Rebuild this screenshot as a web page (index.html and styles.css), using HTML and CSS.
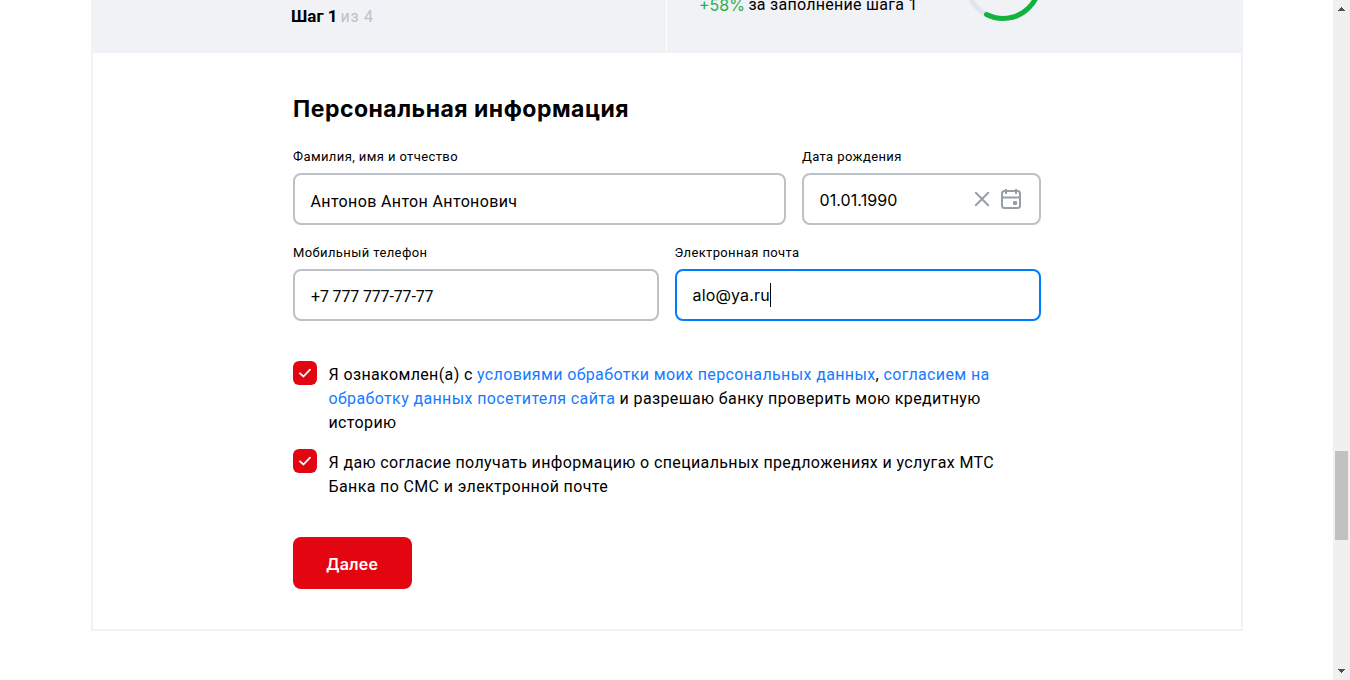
FILE: index.html
```html
<!DOCTYPE html>
<html lang="ru">
<head>
<meta charset="utf-8">
<title>Персональная информация</title>
<link rel="stylesheet" href="styles.css">
</head>
<body>
<main class="page">
  <section class="card">
    <header class="card-head">
      <div class="step"><b class="step-now">Шаг 1</b><span class="step-total">из 4</span></div>
      <div class="bonus">
        <p class="bonus-text"><span class="percent">+58%</span><span class="bonus-label">за заполнение шага 1</span></p>
        <svg class="ring" width="80" height="80" viewBox="0 0 80 80" fill="none" stroke-width="5">
          <circle cx="40" cy="40" r="36.5" stroke="#e2e5eb"/>
          <circle cx="40" cy="40" r="36.5" stroke="#12b23f" stroke-linecap="round" pathLength="100" stroke-dasharray="57.5 42.5" transform="rotate(-90 40 40)"/>
        </svg>
      </div>
    </header>
    <form class="form">
      <h2 class="title">Персональная информация</h2>
      <div class="row row-name">
        <div class="field"><span class="label">Фамилия, имя и отчество</span><div class="input name">Антонов Антон Антонович</div></div>
        <div class="field"><span class="label">Дата рождения</span>
          <div class="input date"><span class="value">01.01.1990</span>
            <svg width="16" height="16" viewBox="0 0 16 16" fill="none" stroke="#969fa8" stroke-width="2" stroke-linecap="round"><path d="M1.8 1.8 14.2 14.2M14.2 1.8 1.8 14.2"/></svg>
            <svg class="calendar" width="20" height="20" viewBox="0 0 20 20" fill="none" stroke="#969fa8" stroke-width="2"><rect x="1" y="2" width="18" height="17" rx="2.5"/><path d="M1 8.5h18M5 0v5M15 0v5"/><rect x="12" y="12" width="4" height="4" rx="1" fill="#969fa8" stroke="none"/></svg>
          </div>
        </div>
      </div>
      <div class="row row-contact">
        <div class="field"><span class="label">Мобильный телефон</span><div class="input phone">+7 777 777-77-77</div></div>
        <div class="field"><span class="label label-mail">Электронная почта</span><div class="input mail">alo@ya.ru<i class="caret"></i></div></div>
      </div>
      <div class="agree">
        <span class="check"><svg width="24" height="24" viewBox="0 0 24 24" fill="none" stroke="#fff" stroke-width="1.8" stroke-linecap="round" stroke-linejoin="round"><path d="M7 12.3 10.5 15.5 17 8.7"/></svg></span>
        <p class="agree-text">Я ознакомлен(а) с <a class="link">условиями обработки моих персональных данных</a>, <a class="link">согласием на<br>обработку данных посетителя сайта</a> и разрешаю банку проверить мою кредитную<br>историю</p>
      </div>
      <div class="agree">
        <span class="check"><svg width="24" height="24" viewBox="0 0 24 24" fill="none" stroke="#fff" stroke-width="1.8" stroke-linecap="round" stroke-linejoin="round"><path d="M7 12.3 10.5 15.5 17 8.7"/></svg></span>
        <p class="agree-text">Я даю согласие получать информацию о специальных предложениях и услугах МТС<br>Банка по СМС и электронной почте</p>
      </div>
      <button class="next" type="button">Далее</button>
    </form>
  </section>
</main>
<aside class="scrollbar">
  <svg width="7" height="4" viewBox="0 0 7 4" fill="#505050" shape-rendering="crispEdges"><path d="M3 0h1v1h1v1h1v1h1v1H0V3h1V2h1V1h1z"/></svg>
  <div class="thumb"></div>
  <svg width="7" height="4" viewBox="0 0 7 4" fill="#505050" shape-rendering="crispEdges"><path d="M0 0h7v1H6v1H5v1H4v1H3V3H2V2H1V1H0z"/></svg>
</aside>
</body>
</html>
```
FILE: styles.css
```css
* { box-sizing: border-box; }
body {
  display: flex;
  height: 680px;
  margin: 0;
  overflow: hidden;
  background: #fff;
  color: #000;
  font: 16px/24px Roboto, sans-serif;
  letter-spacing: 0.4px;
}
.page { flex: 1; padding-left: 91px; }
.card {
  width: 1152px;
  height: 695px;
  margin-top: -64px;
  border: 2px solid #f1f2f7;
}
.card-head {
  display: grid;
  grid-template-columns: 573px 1fr;
  height: 115px;
  padding-bottom: 2px;
  background: #f1f2f6;
  white-space: nowrap;
}
.step { display: flex; gap: 4px; padding: 66px 0 0 198px; }
.step-now { font-size: 17px; letter-spacing: 0; }
.step-total { margin-top: 1px; margin-left: -1px; color: #bbc1c7; letter-spacing: 0.7px; }
.bonus { display: flex; padding: 3px 0 0 32px; border-left: 1px solid #fff; }
.bonus-text { display: flex; gap: 3.5px; width: 264px; margin: 52px 0 0; }
.percent { color: #26b04c; font-family: Inter, sans-serif; letter-spacing: 0; }
.bonus-label { letter-spacing: 0.28px; }
.ring { display: block; flex: none; margin-top: 0.6px; }

.form { width: 948px; padding: 40px 0 0 200px; }
.title {
  height: 32px;
  margin: 0 0 20px;
  font: 700 23px/32px Inter, sans-serif;
  letter-spacing: 0.5px;
  white-space: nowrap;
}
.row { display: grid; gap: 16px; margin-bottom: 16px; }
.row-name { grid-template-columns: 493px 239px; }
.row-contact { grid-template-columns: 366px 366px; margin-bottom: 40px; }
.label {
  display: block;
  height: 20px;
  margin-bottom: 8px;
  font-size: 13px;
  line-height: 24px;
}
.label-mail { margin-left: -0.5px; letter-spacing: 0.37px; }
.input {
  display: flex;
  align-items: center;
  height: 52px;
  padding: 3px 16px 0;
  border: 2px solid #bbc1c7;
  border-radius: 8px;
}
.name { padding: 5px 0 0 15.5px; letter-spacing: 0.36px; }
.date { padding: 0 18px 0 15.5px; font-family: Inter, sans-serif; letter-spacing: 0.09px; }
.value { flex: 1; padding-top: 1px; }
.calendar { margin-left: 11px; }
.phone { letter-spacing: -0.15px; }
.mail { padding: 0 15.5px; border-color: #007cff; font-family: Inter, sans-serif; letter-spacing: 0.15px; }
.caret { width: 1px; height: 24px; margin-top: -1px; background: #000; }

.agree { display: flex; gap: 12px; margin-bottom: 16px; white-space: nowrap; }
.check { width: 24px; height: 24px; border-radius: 6px; background: #e30611; }
.check svg { display: block; }
.agree-text { margin: 2px 0 -2px -0.5px; letter-spacing: 0.37px; }
.link { color: #147bff; }
.next {
  display: block;
  width: 119px;
  height: 52px;
  margin-top: 40px;
  padding: 2px 1px 0 0;
  border: 0;
  border-radius: 8px;
  background: #e30611;
  color: #fff;
  font: 600 16px/24px Inter, sans-serif;
  letter-spacing: 0.2px;
}
.scrollbar {
  display: flex;
  flex-direction: column;
  align-items: center;
  width: 17px;
  padding: 7px 0;
  background: #f0f0f0;
}
.thumb { width: 13px; height: 89px; margin: 440px 0 129px; background: #c1c1c1; }
```
